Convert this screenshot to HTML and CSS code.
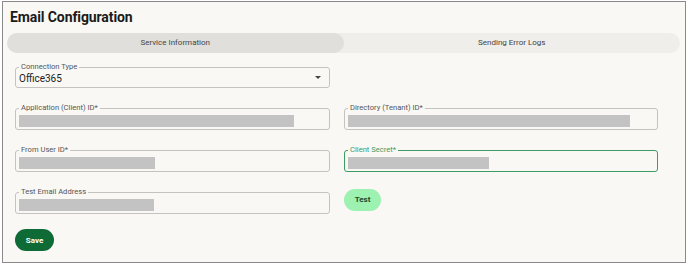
FILE: index.html
```html
<!DOCTYPE html>
<html>
<head>
  <title>Email Configuration</title>
  <link rel="stylesheet" href="styles.css">
</head>
<body>
  <div class="frame">
    <h1>Email Configuration</h1>
    <div class="tabs">
      <div class="tab active">Service Information</div>
      <div class="tab">Sending Error Logs</div>
    </div>

    <div class="form">
      <div class="field select">
        <span class="label">Connection Type</span>
        <div class="value">Office365</div>
        <span class="caret"></span>
      </div>
      <div></div>

      <div class="field">
        <span class="label">Application (Client) ID*</span>
        <div class="mask" style="width: 275px"></div>
      </div>
      <div class="field">
        <span class="label">Directory (Tenant) ID*</span>
        <div class="mask" style="width: 282px"></div>
      </div>

      <div class="field">
        <span class="label">From User ID*</span>
        <div class="mask" style="width: 136px"></div>
      </div>
      <div class="field focused">
        <span class="label">Client Secret*</span>
        <div class="mask" style="width: 141px"></div>
      </div>

      <div class="field">
        <span class="label">Test Email Address</span>
        <div class="mask" style="width: 135px"></div>
      </div>
      <div class="actions">
        <button class="btn test">Test</button>
      </div>
    </div>

    <button class="btn save">Save</button>
  </div>
</body>
</html>
```

FILE: styles.css
```css
body {
  margin: 0;
  font-family: Roboto, "Liberation Sans", sans-serif;
  background-color: #fff;
}
.frame {
  margin: 1px 2px 2px 2px;
  height: 262px;
  box-sizing: border-box;
  border: 1px solid #8a8a8a;
  background-color: #f9f8f5;
  padding: 0 5px 0 4px;
}
h1 {
  margin: 0;
  padding: 7px 0 0 3px;
  font-size: 14px;
  font-weight: 700;
  color: #1a1a1a;
  height: 23px;
  line-height: 17px;
  letter-spacing: -0.1px;
}
.tabs {
  display: flex;
  margin-top: 1px;
  height: 20px;
  background-color: #efeeea;
  border-radius: 10px;
}
.tab {
  flex: 1;
  text-align: center;
  font-size: 8px;
  line-height: 20px;
  color: #444;
  border-radius: 10px;
}
.tab.active {
  background-color: #e0dfdb;
}
.form {
  display: grid;
  grid-template-columns: 315px 314px;
  column-gap: 14px;
  row-gap: 20px;
  padding: 14px 0 0 8px;
}
.field {
  position: relative;
  height: 22px;
  box-sizing: border-box;
  border: 1px solid #c4c3bf;
  border-radius: 3px;
  padding: 6px 3px 0 3px;
}
.field.select {
  height: 21px;
  padding: 5px 7px 0 3px;
}
.field.focused {
  border: 1.5px solid #3f9a63;
}
.label {
  position: absolute;
  top: -6px;
  left: 3px;
  padding: 0 2px;
  font-size: 7.6px;
  line-height: 10px;
  color: #555;
  background-color: #f9f8f5;
}
.focused .label {
  color: #3f9a63;
}
.value {
  font-size: 10px;
  line-height: 11px;
  color: #222;
}
.caret {
  position: absolute;
  right: 8px;
  top: 8px;
  border-left: 3px solid transparent;
  border-right: 3px solid transparent;
  border-top: 3px solid #444;
}
.mask {
  height: 12px;
  background-color: #c3c3c3;
}
.actions {
  margin-top: -5px;
}
.btn {
  border: none;
  border-radius: 11px;
  height: 22px;
  font-family: Roboto, "Liberation Sans", sans-serif;
  font-size: 8px;
  font-weight: 700;
  cursor: pointer;
}
.btn.test {
  width: 37px;
  background-color: #9df1b1;
  color: #1d4a2b;
}
.btn.save {
  display: block;
  margin: 15px 0 0 8px;
  width: 39px;
  background-color: #0f6b36;
  color: #fff;
}
```
